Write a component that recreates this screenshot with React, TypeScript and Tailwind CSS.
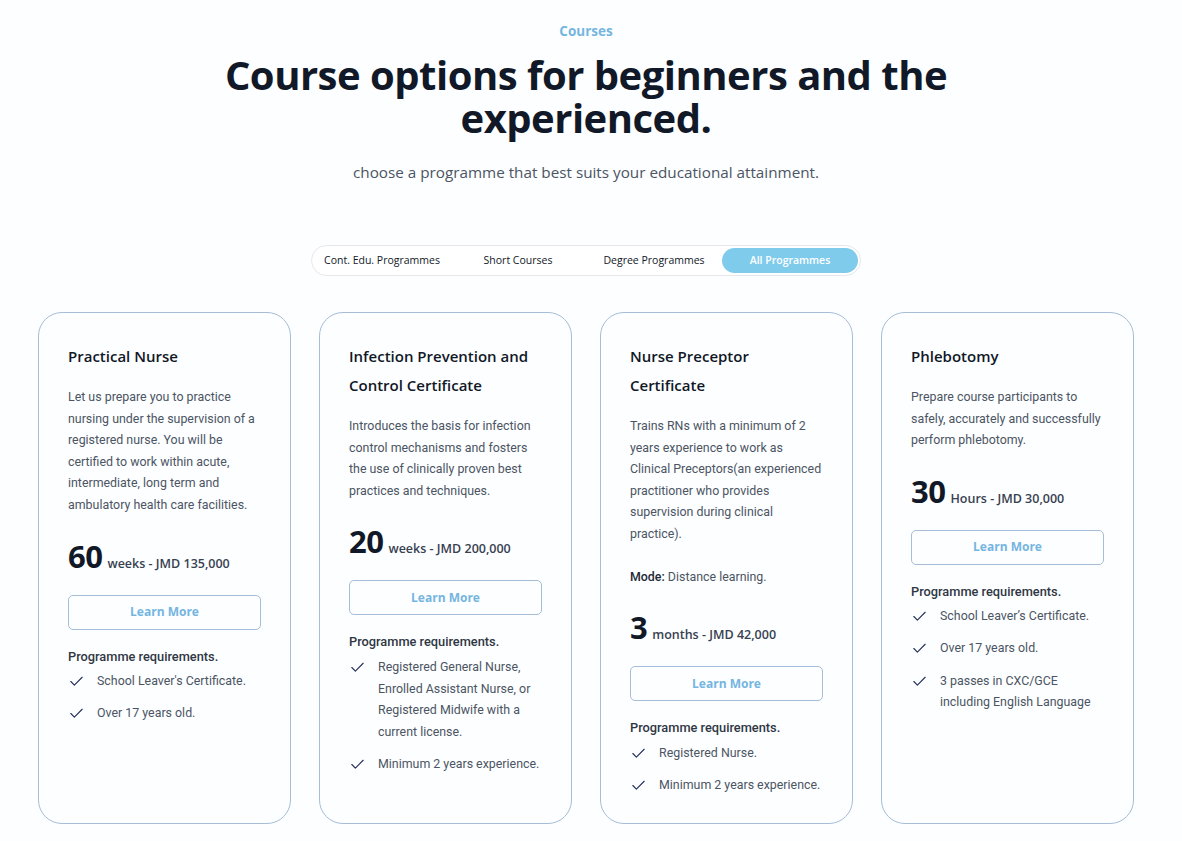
import { Check } from "lucide-react";

type Course = {
  title: string;
  desc: string;
  mode?: string;
  amount: string;
  unit: string;
  reqs: string[];
};

const courses: Course[] = [
  {
    title: "Practical Nurse",
    desc: "Let us prepare you to practice nursing under the supervision of a registered nurse. You will be certified to work within acute, intermediate, long term and ambulatory health care facilities.",
    amount: "60",
    unit: "weeks - JMD 135,000",
    reqs: ["School Leaver's Certificate.", "Over 17 years old."],
  },
  {
    title: "Infection Prevention and Control Certificate",
    desc: "Introduces the basis for infection control mechanisms and fosters the use of clinically proven best practices and techniques.",
    amount: "20",
    unit: "weeks - JMD 200,000",
    reqs: [
      "Registered General Nurse, Enrolled Assistant Nurse, or Registered Midwife with a current license.",
      "Minimum 2 years experience.",
    ],
  },
  {
    title: "Nurse Preceptor Certificate",
    desc: "Trains RNs with a minimum of 2 years experience to work as Clinical Preceptors(an experienced practitioner who provides supervision during clinical practice).",
    mode: "Distance learning.",
    amount: "3",
    unit: "months - JMD 42,000",
    reqs: ["Registered Nurse.", "Minimum 2 years experience."],
  },
  {
    title: "Phlebotomy",
    desc: "Prepare course participants to safely, accurately and successfully perform phlebotomy.",
    amount: "30",
    unit: "Hours - JMD 30,000",
    reqs: [
      "School Leaver\u2019s Certificate.",
      "Over 17 years old.",
      "3 passes in CXC/GCE including English Language",
    ],
  },
];

const tabs = ["Cont. Edu. Programmes", "Short Courses", "Degree Programmes", "All Programmes"];

const body = { fontFamily: 'Roboto, "Liberation Sans", sans-serif' };

function CourseCard({ course }: { course: Course }) {
  return (
    <div className="flex flex-col rounded-[24px] border border-[#a5bdd6] bg-[#fdfeff] px-[29px] pt-[29px]">
      <h3 className="text-[15px] font-semibold leading-[29px] text-[#111827]">{course.title}</h3>
      <p style={body} className="mt-[15px] text-[12.4px] leading-[21.6px] text-[#4b5563]">
        {course.desc}
      </p>
      {course.mode && (
        <p style={body} className="mt-[21px] text-[12.4px] leading-[21.6px] text-[#4b5563]">
          <span className="font-medium text-[#1f2937]">Mode:</span> {course.mode}
        </p>
      )}
      <div className="mt-5 flex h-[40px] items-baseline gap-[5px]">
        <span className="text-[31px] font-bold leading-[40px] tracking-[-0.5px] text-[#111827]">
          {course.amount}
        </span>
        <span className="text-[12.5px] font-semibold leading-none text-[#374151]">{course.unit}</span>
      </div>
      <button className="mt-[19px] h-[35px] w-full shrink-0 rounded-[5px] border border-[#a5bdd6] text-[12px] font-bold text-[#74b5e1]">
        Learn More
      </button>
      <p style={body} className="mt-4 text-[12.8px] font-medium leading-[21.6px] text-[#2f3744]">
        Programme requirements.
      </p>
      <ul style={body} className="mt-[3px] flex flex-col gap-[10.5px]">
        {course.reqs.map((r) => (
          <li key={r} className="flex items-start gap-[12px] text-[12.4px] leading-[21.6px] text-[#4b5563]">
            <Check className="mt-[3px] h-[17px] w-[17px] shrink-0 text-[#25305a]" strokeWidth={1.6} />
            <span>{r}</span>
          </li>
        ))}
      </ul>
    </div>
  );
}

export default function App() {
  return (
    <div
      className="min-h-[841px] bg-[#fdfeff] pr-[10px] pt-[21px]"
      style={{ fontFamily: '"Open Sans", "Noto Sans", sans-serif' }}
    >
      <div className="flex flex-col items-center text-center">
        <p className="text-[13.5px] font-bold leading-[20px] text-[#74b6e0]">Courses</p>
        <h1 className="mt-3 max-w-[760px] text-[40px] font-bold leading-[43px] tracking-[-0.5px] text-[#111827]">
          Course options for beginners and the experienced.
        </h1>
        <p className="mt-[21px] text-[15.25px] leading-[24px] text-[#4b5563]">
          choose a programme that best suits your educational attainment.
        </p>

        <div className="mt-[61px] grid w-[550px] grid-cols-4 rounded-full border border-[#e5e7eb] bg-white p-[2px]">
          {tabs.map((t, i) => (
            <button
              key={t}
              className={
                i === 3
                  ? "h-[25px] rounded-full bg-[#7fcbec] text-[10.5px] font-semibold text-white"
                  : "h-[25px] rounded-full text-[10.5px] font-medium text-[#111827]"
              }
            >
              {t}
            </button>
          ))}
        </div>
      </div>

      <div className="mx-auto mt-[36px] grid h-[512px] w-[1096px] grid-cols-4 gap-[28px]">
        {courses.map((c) => (
          <CourseCard key={c.title} course={c} />
        ))}
      </div>
    </div>
  );
}
